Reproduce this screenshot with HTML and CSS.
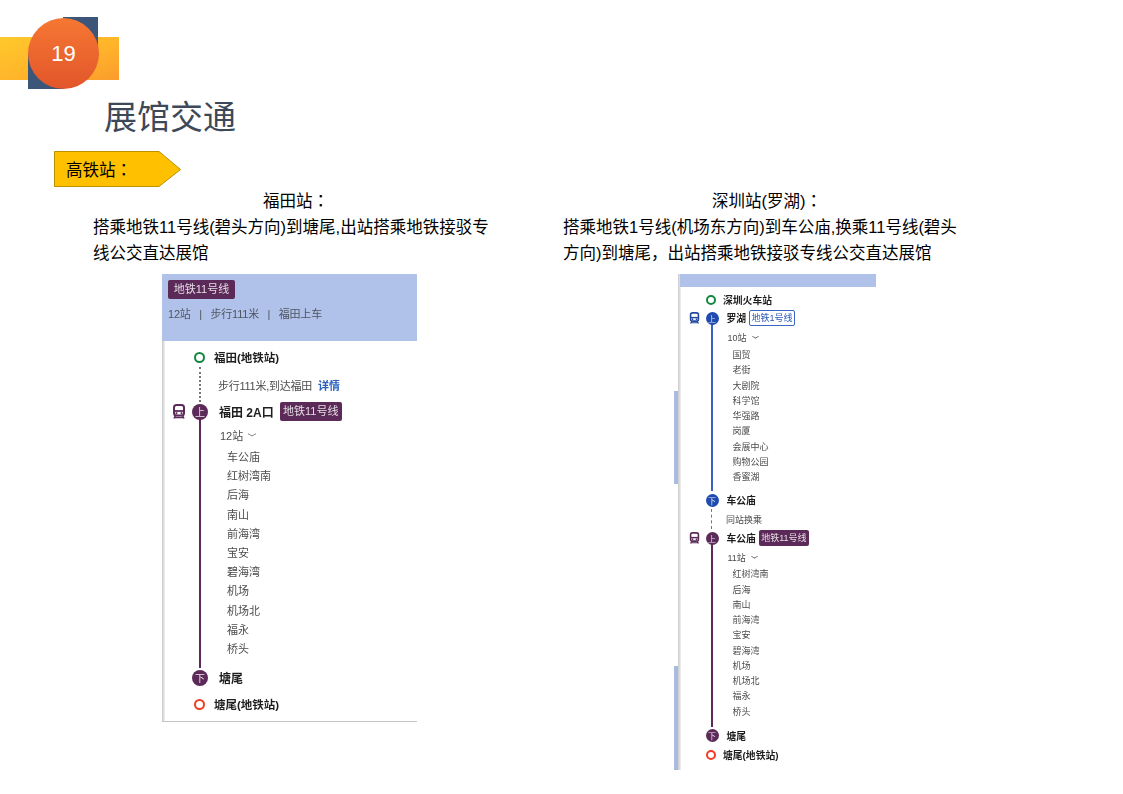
FILE: index.html
```html
<!DOCTYPE html>
<html lang="zh-CN">
<head>
<meta charset="utf-8">
<title>展馆交通</title>
<link rel="stylesheet" href="styles.css">
</head>
<body>
<main class="slide">
  <div class="page-mark">
    <div class="band"></div>
    <div class="square"></div>
    <div class="circle">19</div>
  </div>
  <h1 class="title">展馆交通</h1>
  <div class="tag">
    <svg class="tag-shape" width="128" height="37" viewBox="0 0 128 37"><polygon points="0.5,0.5 105,0.5 126.5,18.5 105,35.5 0.5,35.5" fill="#ffc000" stroke="#bd9000" stroke-width="1"/></svg>
    <span class="tag-text">高铁站<span class="punct" lang="zh-TW">：</span></span>
  </div>
  <div class="columns">
    <section class="col col-left">
      <div class="col-text">
        <div class="col-title">福田站<span class="punct" lang="zh-TW">：</span></div>
        <p class="col-body">搭乘地铁11号线(碧头方向)到塘尾,出站搭乘地铁接驳专线公交直达展馆</p>
      </div>
      <div class="route route-large">
        <div class="edge"></div>
        <div class="route-main">
          <div class="head">
            <span class="chip chip-purple">地铁11号线</span>
            <div class="head-info">12站&nbsp;&nbsp;&nbsp;|&nbsp;&nbsp;&nbsp;步行111米&nbsp;&nbsp;&nbsp;|&nbsp;&nbsp;&nbsp;福田上车</div>
          </div>
          <div class="row row-end">
            <span class="ring ring-green"></span><b class="name">福田(地铁站)</b>
          </div>
          <div class="leg leg-dotted"><span class="walk">步行111米,到达福田</span><a class="more">详情</a></div>
          <div class="row row-stop">
            <svg class="train purple" viewBox="0 0 14 15"><use href="#t"/></svg>
            <span class="node purple-bg">上</span><b class="name">福田 2A口</b><span class="chip chip-purple">地铁11号线</span>
          </div>
          <div class="leg leg-solid purple-line">
            <div class="count">12站<i class="chev"></i></div>
            <ul class="stations">
              <li>车公庙</li><li>红树湾南</li><li>后海</li><li>南山</li><li>前海湾</li><li>宝安</li><li>碧海湾</li><li>机场</li><li>机场北</li><li>福永</li><li>桥头</li>
            </ul>
          </div>
          <div class="row row-stop">
            <span class="train-gap"></span><span class="node purple-bg">下</span><b class="name">塘尾</b>
          </div>
          <div class="row row-end row-last">
            <span class="ring ring-red"></span><b class="name">塘尾(地铁站)</b>
          </div>
        </div>
      </div>
    </section>
    <section class="col col-right">
      <div class="col-text">
        <div class="col-title">深圳站(罗湖)<span class="punct" lang="zh-TW">：</span></div>
        <p class="col-body">搭乘地铁1号线(机场东方向)到车公庙,换乘11号线(碧头方向)到塘尾，出站搭乘地铁接驳专线公交直达展馆</p>
      </div>
      <div class="route route-small">
        <div class="sliver"><div class="s-blue s-a"></div><div class="s-blue s-b"></div></div>
        <div class="edge"></div>
        <div class="route-main">
          <div class="head"></div>
          <div class="row row-end">
            <span class="ring ring-green"></span><b class="name">深圳火车站</b>
          </div>
          <div class="row row-stop">
            <svg class="train blue" viewBox="0 0 14 15"><use href="#t"/></svg>
            <span class="node blue-bg">上</span><b class="name">罗湖</b><span class="chip chip-outline">地铁1号线</span>
          </div>
          <div class="leg leg-solid blue-line">
            <div class="count">10站<i class="chev"></i></div>
            <ul class="stations">
              <li>国贸</li><li>老街</li><li>大剧院</li><li>科学馆</li><li>华强路</li><li>岗厦</li><li>会展中心</li><li>购物公园</li><li>香蜜湖</li>
            </ul>
          </div>
          <div class="row row-stop">
            <span class="train-gap"></span><span class="node blue-bg">下</span><b class="name">车公庙</b>
          </div>
          <div class="leg leg-dashed"><span class="walk">同站换乘</span></div>
          <div class="row row-stop">
            <svg class="train purple" viewBox="0 0 14 15"><use href="#t"/></svg>
            <span class="node purple-bg">上</span><b class="name">车公庙</b><span class="chip chip-purple">地铁11号线</span>
          </div>
          <div class="leg leg-solid purple-line leg-second">
            <div class="count">11站<i class="chev"></i></div>
            <ul class="stations">
              <li>红树湾南</li><li>后海</li><li>南山</li><li>前海湾</li><li>宝安</li><li>碧海湾</li><li>机场</li><li>机场北</li><li>福永</li><li>桥头</li>
            </ul>
          </div>
          <div class="row row-stop">
            <span class="train-gap"></span><span class="node purple-bg">下</span><b class="name">塘尾</b>
          </div>
          <div class="row row-end row-last">
            <span class="ring ring-red"></span><b class="name">塘尾(地铁站)</b>
          </div>
        </div>
      </div>
    </section>
  </div>
</main>
<svg class="defs" width="0" height="0"><defs>
  <g id="t" fill="none" stroke="currentColor">
    <rect x="2" y="1" width="10" height="10.500" rx="2.500" stroke-width="2"/>
    <path d="M2 7h10" stroke-width="1.800"/>
    <path d="M3.600 8.200h1.800v2h-1.800zM8.600 8.200h1.800v2h-1.800z" fill="currentColor" stroke="none"/>
    <path d="M3.500 11.500L2 14.500M10.500 11.500L12 14.500M2.800 13.500h8.400" stroke-width="1.500"/>
  </g>
</defs></svg>
</body>
</html>
```
FILE: styles.css
```css
* { box-sizing: border-box; }
html, body { margin: 0; padding: 0; background: #fff; }
body {
  width: 1123px;
  height: 794px;
  overflow: hidden;
  font-family: "Liberation Sans", "Noto Sans CJK SC", sans-serif;
  color: #000;
}
.slide { position: relative; width: 1123px; height: 794px; }
.defs { position: absolute; }
.punct { font-family: "Noto Sans CJK TC", sans-serif; }

/* page marker */
.page-mark { position: relative; height: 89px; width: 119px; }
.band {
  position: absolute; left: 0; top: 37px; width: 119px; height: 43px;
  background: linear-gradient(160deg, #ffc92c 0%, #ffb42a 55%, #fb9c2c 100%);
}
.square {
  position: absolute; left: 28px; top: 17px; width: 70px; height: 72px;
  background: conic-gradient(#3b5679 0 90deg, transparent 90deg 180deg, #3b5679 180deg 270deg, transparent 270deg);
}
.circle {
  position: absolute; left: 28px; top: 18px; width: 71px; height: 71px;
  border-radius: 50%;
  background: linear-gradient(180deg, #f67733 0%, #e2562b 100%);
  color: #fff; font-size: 22px;
  display: flex; align-items: center; justify-content: center;
}

.title {
  margin: 4px 0 0 104px;
  height: 48px;
  font-size: 33px; line-height: 49px; font-weight: 400;
  color: #3d4859;
}

/* yellow tag */
.tag { position: relative; margin: 10px 0 0 54px; width: 128px; height: 37px; }
.tag-shape { display: block; }
.tag-text {
  position: absolute; left: 12px; top: 0; line-height: 36px;
  font-size: 16.500px;
}

/* two columns */
.columns { position: relative; height: 607px; margin-top: -1px; }
.col { position: absolute; top: 0; }
.col-left { left: 93px; width: 406px; }
.col-right { left: 563px; width: 408px; }
.col-text { height: 87px; font-size: 16.500px; }
.col-title { text-align: center; line-height: 26px; }
.col-body { margin: 0; line-height: 26px; }

/* route screenshots */
.route {
  display: flex;
  filter: blur(0.45px);
  background: #fff;
}
.route-large { margin-left: 69px; width: 255px; height: 448px; border-bottom: 1px solid #c4c4c4; }
.route-small { margin-left: 111px; width: 202px; height: 496px; }
.route-main { flex: 1; min-width: 0; }
.edge { flex: none; width: 3px; background: linear-gradient(90deg, #c8c8c8, #f2f2f2); }
.sliver { flex: none; width: 4px; background: #fff; position: relative; }
.s-blue { position: absolute; left: 0; width: 4px; background: #aabbe0; }
.s-a { top: 117px; height: 93px; }
.s-b { top: 392px; height: 104px; }

.head { background: #b0c2ea; }
.route-large .head { height: 67px; margin-left: -3px; padding: 5px 0 0 6px; }
.route-small .head { height: 13px; margin-left: -1px; }
.head-info { margin-top: 6px; font-size: 11px; line-height: 18px; color: #4f5560; letter-spacing: -0.2px; }

.chip { display: inline-block; border-radius: 2px; white-space: nowrap; text-align: center; }
.chip-purple { background: #5c2a58; color: #e4dde4; }
.chip-outline { background: #fff; border: 1px solid #3b66c4; color: #2c58b8; }
.route-large .chip { width: 67px; height: 19px; font-size: 11px; line-height: 19px; }
.route-large .row .chip { width: 62px; margin-left: 6px; }
.route-small .chip { width: 50px; height: 16px; font-size: 9px; line-height: 16px; }
.route-small .chip-outline { width: 46px; line-height: 14px; }

.row { display: flex; align-items: center; white-space: nowrap; }
.name { font-weight: 700; color: #1e1e1e; }
.ring { flex: none; border-radius: 50%; background: #fff; }
.ring-green { border-color: #13863f; border-style: solid; }
.ring-red { border-color: #f23c22; border-style: solid; }
.node {
  position: relative; z-index: 1;
  flex: none; border-radius: 50%; color: #e8e0e8;
  display: flex; align-items: center; justify-content: center;
}
.purple-bg { background: #5c2a58; }
.blue-bg { background: #1f4bb0; }
.train { flex: none; display: block; }
.train-gap { flex: none; display: block; }
.purple { color: #5c2a58; }
.blue { color: #23499f; }

.leg { border-left-style: solid; }
.purple-line { border-left-color: #5c2a58; }
.blue-line { border-left-color: #3a62c0; }
.leg-dotted { border-left: 2px dotted #777; display: flex; align-items: center; }
.leg-dashed { border-left: 1px dashed #777; display: flex; align-items: center; }
.walk, .count, .stations { color: #4c4c4c; }
.more { color: #2a5fc0; font-weight: 700; }
.count { display: flex; align-items: center; }
.chev {
  display: inline-block; border-right: 1px solid #666; border-bottom: 1px solid #666;
  transform: scaleY(0.55) rotate(45deg);
}
.stations { list-style: none; margin: 0; padding: 0; }

/* large panel metrics: node centre at x=200 */
.route-large .row { font-size: 11.500px; }
.route-large .row-end { height: 20px; margin-top: 6px; padding-left: 29px; }
.route-large .ring { width: 11px; height: 11px; border-width: 2.200px; margin-right: 9px; }
.route-large .row-stop { height: 19px; padding-left: 7px; font-size: 12px; }
.route-large .train { width: 14px; height: 15px; margin-right: 6px; }
.route-large .train-gap { width: 14px; margin-right: 6px; }
.route-large .node { width: 16px; height: 16px; font-size: 10px; margin-right: 11px; }
.route-large .leg { margin-left: 34px; }
.route-large .leg-dotted { height: 35px; padding-left: 17px; font-size: 11px; }
.route-large .walk { letter-spacing: -0.25px; }
.route-large .more { margin-left: 6px; }
.route-large .leg-solid { border-left-width: 2px; margin-top: -2px; padding: 2px 0 9px 19px; }
.route-large .count { height: 27px; font-size: 11px; }
.route-large .chev { width: 6px; height: 6px; margin: -2px 0 0 6px; }
.route-large .stations { padding-left: 7px; font-size: 11px; line-height: 19.200px; }
.route-large .row-last { margin-top: 7px; }

/* small panel metrics: node centre at x=712 */
.route-small .row { font-size: 9.800px; }
.route-small .row-end { height: 18px; margin-top: 4px; padding-left: 25px; }
.route-small .ring { width: 10px; height: 10px; border-width: 2px; margin-right: 7px; }
.route-small .row-stop { height: 18px; padding-left: 8px; }
.route-small .train { width: 11px; height: 12px; margin-right: 5.500px; }
.route-small .train-gap { width: 11px; margin-right: 5.500px; }
.route-small .node { width: 13px; height: 13px; font-size: 8px; margin-right: 8px; }
.route-small .row-stop .chip { margin-left: 3px; }
.route-small .leg { margin-left: 30px; }
.route-small .leg-solid { border-left-width: 2px; margin-top: -3px; padding: 3px 0 6px 14.500px; }
.route-small .leg-second { padding-bottom: 7px; }
.route-small .leg-second .count { height: 20px; }
.route-small .leg-dashed { height: 20px; padding-left: 14px; font-size: 9px; }
.route-small .count { height: 21px; font-size: 9px; }
.route-small .chev { width: 5px; height: 5px; margin: -2px 0 0 6px; }
.route-small .stations { padding-left: 5px; font-size: 9px; line-height: 15.250px; }
.route-small .row-last { margin-top: 1px; }
```
